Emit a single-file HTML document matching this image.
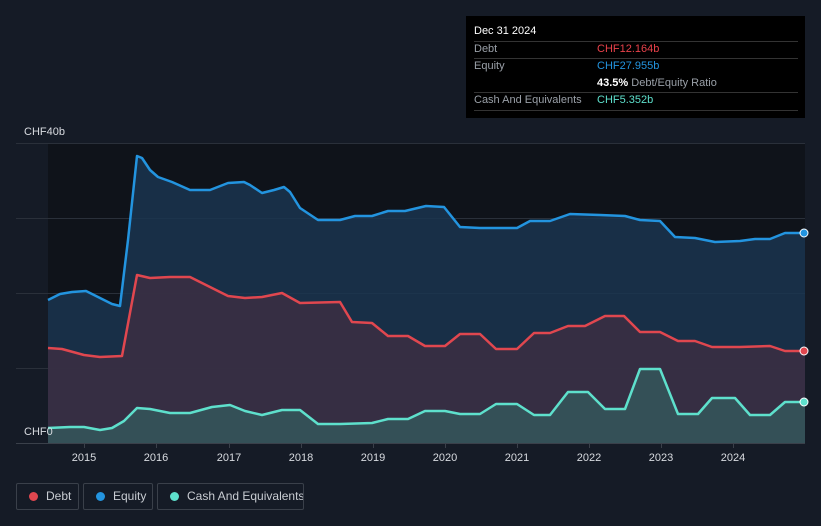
<!DOCTYPE html>
<html><head><style>
body{margin:0;background:#151b26;font-family:"Liberation Sans",sans-serif;}
.wrap{position:relative;width:821px;height:526px;overflow:hidden;background:#151b26}
.tt{position:absolute;left:466px;top:16px;width:339px;height:102px;background:#000;}
.tt div{position:absolute;font-size:11px;}
.ln{position:absolute;left:8px;width:324px;height:1px;background:#333;}
.lg{position:absolute;top:483px;height:27px;border:1px solid #3a404a;border-radius:2px;color:#c8ccd2;font-size:12px;line-height:25px;box-sizing:border-box;white-space:nowrap;overflow:hidden}
.dot{display:inline-block;width:9px;height:9px;border-radius:50%;margin:0 8px 0 12px;vertical-align:-1px}
</style></head><body><div class="wrap">
<svg width="821" height="526" style="position:absolute;left:0;top:0">
<rect x="48" y="143" width="757" height="300" fill="#0f131a"/>
<g stroke="#2a303a" stroke-width="1">
<line x1="16" y1="143.5" x2="805" y2="143.5"/><line x1="16" y1="218.5" x2="805" y2="218.5"/><line x1="16" y1="293.5" x2="805" y2="293.5"/><line x1="16" y1="368.5" x2="805" y2="368.5"/><line x1="16" y1="443.5" x2="805" y2="443.5" stroke="#3a404a"/>
</g>
<path fill="#1a3550" fill-opacity="0.85" d="M48,443 L48,300 L60,294 L72,292 L86,291 L100,298 L112,304 L120,306 L128,240 L137,156 L142,158 L150,170 L158,177 L172,182 L190,190 L210,190 L228,183 L244,182 L250,185 L262,193 L274,190 L284,187 L290,192 L300,208 L318,220 L340,220 L355,216 L372,216 L388,211 L405,211 L426,206 L444,207 L460,227 L480,228 L517,228 L530,221 L550,221 L570,214 L600,215 L625,216 L640,220 L660,221 L675,237 L695,238 L715,242 L740,241 L755,239 L770,239 L785,233 L805,233 L805,443Z"/>
<path fill="#3a2f42" fill-opacity="0.9" d="M48,443 L48,348 L62,349 L84,355 L100,357 L122,356 L137,275 L150,278 L170,277 L190,277 L210,287 L228,296 L245,298 L262,297 L282,293 L300,303 L340,302 L352,322 L372,323 L388,336 L408,336 L425,346 L445,346 L460,334 L480,334 L496,349 L517,349 L534,333 L550,333 L568,326 L585,326 L605,316 L624,316 L640,332 L660,332 L678,341 L695,341 L712,347 L740,347 L770,346 L785,351 L805,351 L805,443Z"/>
<path fill="#34545a" fill-opacity="0.9" d="M48,443 L48,428 L70,427 L84,427 L100,430 L112,428 L124,421 L137,408 L150,409 L170,413 L190,413 L212,407 L230,405 L245,411 L262,415 L282,410 L300,410 L318,424 L340,424 L372,423 L388,419 L408,419 L425,411 L445,411 L460,414 L480,414 L496,404 L517,404 L534,415 L550,415 L568,392 L588,392 L605,409 L625,409 L640,369 L660,369 L678,414 L698,414 L712,398 L735,398 L750,415 L770,415 L785,402 L805,402 L805,443Z"/>
<g fill="none" stroke-width="2.5" stroke-linejoin="round">
<path stroke="#2394df" d="M48,300 L60,294 L72,292 L86,291 L100,298 L112,304 L120,306 L128,240 L137,156 L142,158 L150,170 L158,177 L172,182 L190,190 L210,190 L228,183 L244,182 L250,185 L262,193 L274,190 L284,187 L290,192 L300,208 L318,220 L340,220 L355,216 L372,216 L388,211 L405,211 L426,206 L444,207 L460,227 L480,228 L517,228 L530,221 L550,221 L570,214 L600,215 L625,216 L640,220 L660,221 L675,237 L695,238 L715,242 L740,241 L755,239 L770,239 L785,233 L805,233"/>
<path stroke="#e0474f" d="M48,348 L62,349 L84,355 L100,357 L122,356 L137,275 L150,278 L170,277 L190,277 L210,287 L228,296 L245,298 L262,297 L282,293 L300,303 L340,302 L352,322 L372,323 L388,336 L408,336 L425,346 L445,346 L460,334 L480,334 L496,349 L517,349 L534,333 L550,333 L568,326 L585,326 L605,316 L624,316 L640,332 L660,332 L678,341 L695,341 L712,347 L740,347 L770,346 L785,351 L805,351"/>
<path stroke="#5ee0cc" d="M48,428 L70,427 L84,427 L100,430 L112,428 L124,421 L137,408 L150,409 L170,413 L190,413 L212,407 L230,405 L245,411 L262,415 L282,410 L300,410 L318,424 L340,424 L372,423 L388,419 L408,419 L425,411 L445,411 L460,414 L480,414 L496,404 L517,404 L534,415 L550,415 L568,392 L588,392 L605,409 L625,409 L640,369 L660,369 L678,414 L698,414 L712,398 L735,398 L750,415 L770,415 L785,402 L805,402"/>
</g>
<circle cx="804" cy="233" r="4" fill="#2394df" stroke="#fff" stroke-width="1"/>
<circle cx="804" cy="351" r="4" fill="#e0474f" stroke="#fff" stroke-width="1"/>
<circle cx="804" cy="402" r="4" fill="#5ee0cc" stroke="#fff" stroke-width="1"/>
<g stroke="#3a404a"><line x1="84.5" y1="443" x2="84.5" y2="448"/><line x1="156.5" y1="443" x2="156.5" y2="448"/><line x1="229.5" y1="443" x2="229.5" y2="448"/><line x1="301.5" y1="443" x2="301.5" y2="448"/><line x1="373.5" y1="443" x2="373.5" y2="448"/><line x1="445.5" y1="443" x2="445.5" y2="448"/><line x1="517.5" y1="443" x2="517.5" y2="448"/><line x1="589.5" y1="443" x2="589.5" y2="448"/><line x1="661.5" y1="443" x2="661.5" y2="448"/><line x1="733.5" y1="443" x2="733.5" y2="448"/></g>
<g fill="#d8dbe0" font-size="11" font-family="Liberation Sans,sans-serif" text-anchor="middle">
<text x="84" y="461">2015</text><text x="156" y="461">2016</text><text x="229" y="461">2017</text><text x="301" y="461">2018</text><text x="373" y="461">2019</text><text x="445" y="461">2020</text><text x="517" y="461">2021</text><text x="589" y="461">2022</text><text x="661" y="461">2023</text><text x="733" y="461">2024</text>
</g>
<text x="24" y="135" fill="#d8dbe0" font-size="11" font-family="Liberation Sans,sans-serif">CHF40b</text>
<text x="24" y="435" fill="#d8dbe0" font-size="11" font-family="Liberation Sans,sans-serif">CHF0</text>
</svg>
<div class="tt">
<div style="left:8px;top:9px;color:#fff">Dec 31 2024</div>
<div class="ln" style="top:25px"></div>
<div style="left:8px;top:27px;color:#9aa0a8">Debt</div><div style="left:131px;top:27px;color:#e8414a">CHF12.164b</div>
<div class="ln" style="top:42px"></div>
<div style="left:8px;top:44px;color:#9aa0a8">Equity</div><div style="left:131px;top:44px;color:#2394df">CHF27.955b</div>
<div style="left:131px;top:61px;color:#9aa0a8"><b style="color:#fff">43.5%</b> Debt/Equity Ratio</div>
<div class="ln" style="top:76px"></div>
<div style="left:8px;top:78px;color:#9aa0a8">Cash And Equivalents</div><div style="left:131px;top:78px;color:#5ee0cc">CHF5.352b</div>
<div class="ln" style="top:94px"></div>
</div>
<div class="lg" style="left:16px;width:63px"><span class="dot" style="background:#e0474f"></span>Debt</div>
<div class="lg" style="left:83px;width:70px"><span class="dot" style="background:#2394df"></span>Equity</div>
<div class="lg" style="left:157px;width:147px"><span class="dot" style="background:#5ee0cc"></span>Cash And Equivalents</div>
</div></body></html>
